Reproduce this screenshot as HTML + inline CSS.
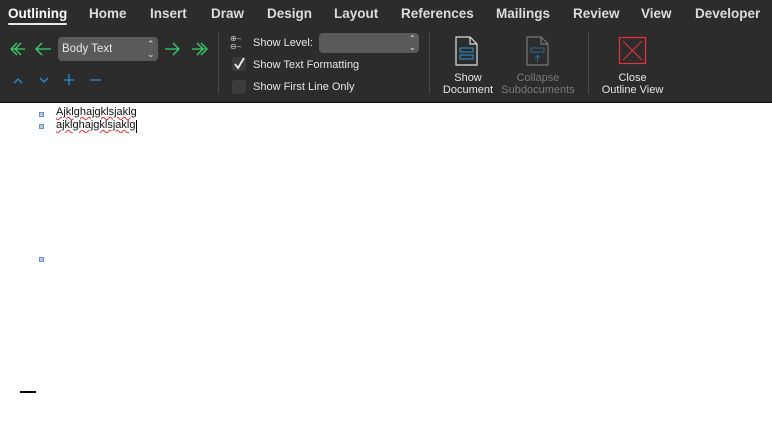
<!DOCTYPE html>
<html><head><style>
body{margin:0;width:772px;height:446px;background:#fff;position:relative;overflow:hidden;font-family:"Liberation Sans",sans-serif}
.bar{position:absolute;left:0;top:0;width:772px;height:102px;background:#2c2c2c;border-bottom:1px solid #0a0a0a}
.t{position:absolute;top:6px;color:#dcdcdc;font-size:13.5px;font-weight:bold}
.a{position:absolute;color:#e6e6e6;font-size:11px}
.s{position:absolute;color:#e6e6e6;font-size:11px;text-align:center;line-height:12px}
.sep{position:absolute;top:32px;width:1px;height:62px;background:#4a4a4a}
.doc{position:absolute;font-size:11px;color:#111;text-decoration:underline wavy #e03030;text-decoration-thickness:1px;text-underline-offset:1px}
.b{position:absolute;width:3px;height:3px;border:1px solid #6a8fc8;background:#b9cbe8}
</style></head><body>
<div class="bar"></div>
<div class="t" style="left:8px;color:#fff">Outlining</div>
<div style="position:absolute;left:8px;top:23px;width:59px;height:2px;background:#e8e8e8;border-radius:1px"></div>
<div class="t" style="left:89px">Home</div>
<div class="t" style="left:150px">Insert</div>
<div class="t" style="left:211px">Draw</div>
<div class="t" style="left:267px">Design</div>
<div class="t" style="left:334px">Layout</div>
<div class="t" style="left:401px">References</div>
<div class="t" style="left:496px">Mailings</div>
<div class="t" style="left:573px">Review</div>
<div class="t" style="left:641px">View</div>
<div class="t" style="left:695px">Developer</div>
<svg style="position:absolute;left:0;top:30px" width="220" height="60" fill="none" stroke-width="1.3">
<g stroke="#3ad16b"><path d="M12 19h13M17 13l-6 6 6 6M21 13l-6 6 6 6"/><path d="M37 19h14M42 13l-6 6 6 6"/><path d="M165 19h14M173 13l6 6-6 6"/><path d="M192 19h13M197 13l6 6-6 6M201 13l6 6-6 6"/></g>
<g stroke="#1e8fe0"><path d="M14 53l4-4 4 4"/><path d="M40 48l4 4 4-4"/><path d="M69 44v11M63.5 50h11"/><path d="M90 50h11"/></g>
</svg>
<div style="position:absolute;left:58px;top:37px;width:100px;height:24px;background:#5a5a5a;border-radius:4px"></div>
<div class="a" style="left:62px;top:43px;font-size:11.5px">Body Text</div>
<div class="a" style="left:147px;top:39px;font-size:9px;line-height:10px">⌃<br>⌄</div>
<div class="sep" style="left:218px"></div>
<div class="a" style="left:230px;top:35px;font-size:8px;line-height:8px;color:#ccc">⊕–<br>⊖–</div>
<div class="a" style="left:253px;top:37px">Show Level:</div>
<div style="position:absolute;left:319px;top:33px;width:100px;height:20px;background:#5a5a5a;border-radius:4px"></div>
<div class="a" style="left:409px;top:34px;font-size:8px;line-height:9px">⌃<br>⌄</div>
<div style="position:absolute;left:232px;top:57px;width:14px;height:14px;background:#3c3c3c;border-radius:3px"></div>
<svg style="position:absolute;left:232px;top:56px" width="16" height="16"><path d="M3 8l3 4 6-10" stroke="#eee" stroke-width="1.8" fill="none"/></svg>
<div class="a" style="left:253px;top:59px">Show Text Formatting</div>
<div style="position:absolute;left:232px;top:80px;width:14px;height:14px;background:#3c3c3c;border-radius:3px"></div>
<div class="a" style="left:253px;top:81px">Show First Line Only</div>
<div class="sep" style="left:429px"></div>
<svg style="position:absolute;left:450px;top:36px" width="140" height="30" fill="none">
<path d="M6 1h14l7 7v21H6z M20 1v7h7" stroke="#ddd" stroke-width="1.2"/>
<rect x="10" y="12" width="13" height="4" stroke="#2f95d8"/><rect x="10" y="19" width="13" height="4" stroke="#2f95d8"/>
<path d="M77 1h14l7 7v21H77z M91 1v7h7" stroke="#777" stroke-width="1.2"/>
<rect x="81" y="12" width="13" height="4" stroke="#2a6c98"/><path d="M87.5 26v-6M85 22l2.5-2.5 2.5 2.5" stroke="#2a6c98"/>
</svg>
<div class="s" style="left:438px;top:72px;width:60px">Show<br>Document</div>
<div class="s" style="left:500px;top:72px;width:76px;color:#7a7a7a">Collapse<br>Subdocuments</div>
<div class="sep" style="left:588px"></div>
<svg style="position:absolute;left:618px;top:36px" width="30" height="30"><rect x="1.5" y="1.5" width="26" height="26" stroke="#e8333a" fill="none" stroke-width="1.2"/><path d="M5 5l19 19M24 5L5 24" stroke="#e8333a"/></svg>
<div class="s" style="left:595px;top:72px;width:75px">Close<br>Outline View</div>
<div class="b" style="left:39px;top:112px"></div>
<div class="doc" style="left:56px;top:106px">Ajklghajgklsjaklg</div>
<div class="b" style="left:39px;top:124px"></div>
<div class="doc" style="left:56px;top:119px">ajklghajgklsjaklg</div>
<div style="position:absolute;left:136px;top:120px;width:1px;height:13px;background:#000"></div>
<div class="b" style="left:39px;top:257px"></div>
<div style="position:absolute;left:20px;top:391px;width:16px;height:2px;background:#000"></div>
</body></html>
